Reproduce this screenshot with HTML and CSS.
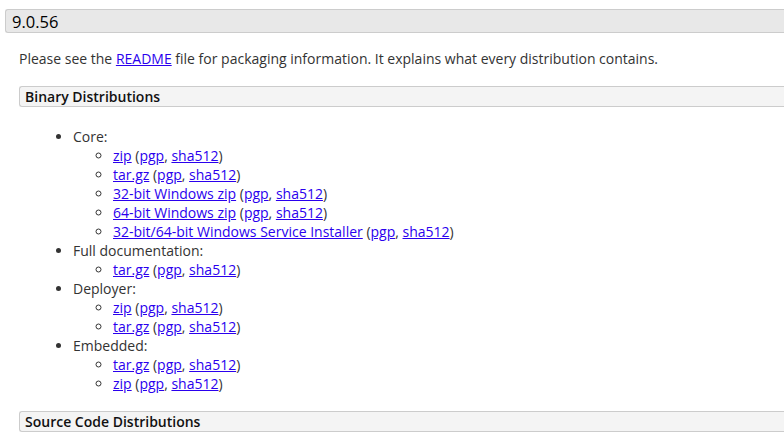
FILE: index.html
```html
<!DOCTYPE html>
<html>
<head>
<meta charset="utf-8">
<link rel="stylesheet" href="styles.css">
</head>
<body>
<div class="section">
  <h3 class="ver">9.0.56</h3>
  <div class="body">
    <p class="intro">Please see the <a href="#">README</a> file for packaging information. It explains what every distribution contains.</p>
    <h4 class="sub">Binary Distributions</h4>
    <ul class="dist">
      <li>Core:
        <ul>
          <li><a href="#">zip</a> (<a href="#">pgp</a>, <a href="#">sha512</a>)</li>
          <li><a href="#">tar.gz</a> (<a href="#">pgp</a>, <a href="#">sha512</a>)</li>
          <li><a href="#">32-bit Windows zip</a> (<a href="#">pgp</a>, <a href="#">sha512</a>)</li>
          <li><a href="#">64-bit Windows zip</a> (<a href="#">pgp</a>, <a href="#">sha512</a>)</li>
          <li><a href="#">32-bit/64-bit Windows Service Installer</a> (<a href="#">pgp</a>, <a href="#">sha512</a>)</li>
        </ul>
      </li>
      <li>Full documentation:
        <ul>
          <li><a href="#">tar.gz</a> (<a href="#">pgp</a>, <a href="#">sha512</a>)</li>
        </ul>
      </li>
      <li>Deployer:
        <ul>
          <li><a href="#">zip</a> (<a href="#">pgp</a>, <a href="#">sha512</a>)</li>
          <li><a href="#">tar.gz</a> (<a href="#">pgp</a>, <a href="#">sha512</a>)</li>
        </ul>
      </li>
      <li>Embedded:
        <ul>
          <li><a href="#">tar.gz</a> (<a href="#">pgp</a>, <a href="#">sha512</a>)</li>
          <li><a href="#">zip</a> (<a href="#">pgp</a>, <a href="#">sha512</a>)</li>
        </ul>
      </li>
    </ul>
    <h4 class="sub">Source Code Distributions</h4>
  </div>
</div>
</body>
</html>
```
FILE: styles.css
```css
html, body {
  margin: 0;
  padding: 0;
  background: #fff;
}
body {
  font-family: "Open Sans", "Liberation Sans", sans-serif;
  font-size: 14px;
  line-height: 19px;
  color: #333;
  overflow: hidden;
}
.section {
  padding-top: 9px;
  padding-left: 5px;
}
.ver {
  margin: 0;
  font-size: 16.5px;
  font-weight: normal;
  color: #000;
  background: #e8e8e8;
  border: 1px solid #ccc;
  border-right: none;
  border-radius: 3px 0 0 3px;
  padding: 1px 6px 0;
  line-height: 21px;
}
.body {
  padding-left: 14px;
}
.intro {
  margin: 16px 0 18px;
}
a {
  color: #2a00ee;
  text-decoration: underline;
}
.sub {
  margin: 0;
  font-size: 14px;
  font-weight: 600;
  color: #111;
  background: #f4f4f4;
  border: 1px solid #ccc;
  border-right: none;
  border-radius: 3px 0 0 3px;
  padding: 0 5px;
  line-height: 19px;
}
.dist {
  margin: 20px 0 18px;
  padding-left: 54px;
}
.dist ul {
  padding-left: 40px;
  margin: 0;
  list-style-type: circle;
}
```
